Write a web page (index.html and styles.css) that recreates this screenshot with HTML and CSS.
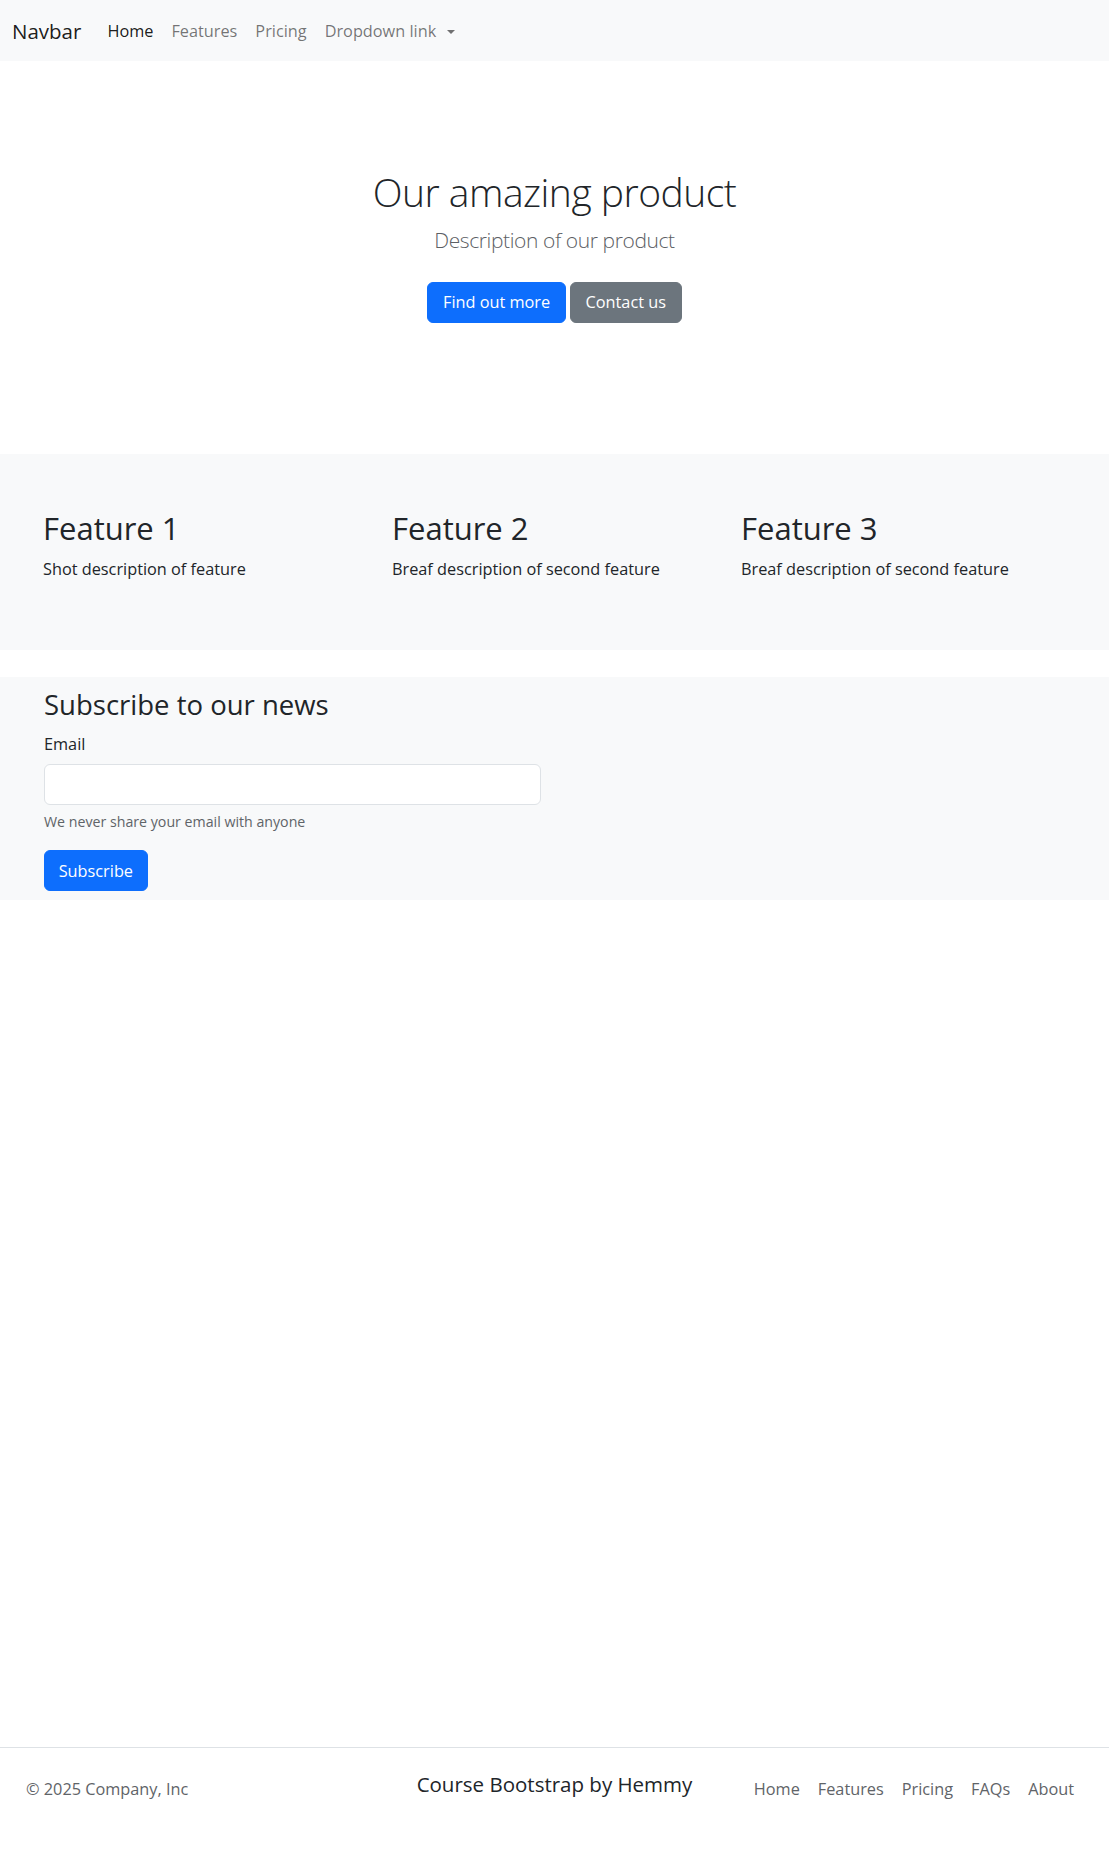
FILE: index.html
```html
<!DOCTYPE html>
<html lang="en">
<head>
<meta charset="utf-8">
<title>Course Bootstrap</title>
<link rel="stylesheet" href="styles.css">
</head>
<body>
<nav class="navbar">
  <a class="brand" href="#">Navbar</a>
  <ul class="nav-links">
    <li><a class="nav-link active" href="#">Home</a></li>
    <li><a class="nav-link" href="#">Features</a></li>
    <li><a class="nav-link" href="#">Pricing</a></li>
    <li><a class="nav-link dropdown" href="#">Dropdown link<span class="caret"></span></a></li>
  </ul>
</nav>
<main>
  <section class="hero">
    <h1 class="hero-title">Our amazing product</h1>
    <p class="lead">Description of our product</p>
    <div class="hero-actions">
      <a class="btn btn-primary" href="#">Find out more</a>
      <a class="btn btn-secondary" href="#">Contact us</a>
    </div>
  </section>
  <section class="features">
    <div class="feature">
      <h2 class="feature-title">Feature 1</h2>
      <p class="feature-text">Shot description of feature</p>
    </div>
    <div class="feature">
      <h2 class="feature-title">Feature 2</h2>
      <p class="feature-text">Breaf description of second feature</p>
    </div>
    <div class="feature">
      <h2 class="feature-title">Feature 3</h2>
      <p class="feature-text">Breaf description of second feature</p>
    </div>
  </section>
  <section class="subscribe">
    <h2 class="subscribe-title">Subscribe to our news</h2>
    <form class="subscribe-form">
      <label class="form-label" for="email">Email</label>
      <input class="form-control" id="email" type="email">
      <div class="form-text">We never share your email with anyone</div>
      <button class="btn btn-primary btn-submit" type="submit">Subscribe</button>
    </form>
  </section>
</main>
<footer class="footer">
  <p class="copyright">© 2025 Company, Inc</p>
  <span class="footer-title">Course Bootstrap by Hemmy</span>
  <ul class="footer-nav">
    <li><a class="footer-link" href="#">Home</a></li>
    <li><a class="footer-link" href="#">Features</a></li>
    <li><a class="footer-link" href="#">Pricing</a></li>
    <li><a class="footer-link" href="#">FAQs</a></li>
    <li><a class="footer-link" href="#">About</a></li>
  </ul>
</footer>
</body>
</html>
```

FILE: styles.css
```css
* {
  box-sizing: border-box;
}

body {
  margin: 0;
  min-height: 100vh;
  display: flex;
  flex-direction: column;
  font-family: "Open Sans", "Segoe UI", sans-serif;
  font-size: 16.3px;
  line-height: 1.5;
  color: #212529;
  background: #fff;
}

/* Navbar */
.navbar {
  display: flex;
  align-items: center;
  height: 61px;
  padding: 2px 12px 0;
  background: #f8f9fa;
}

.brand {
  font-size: 20.5px;
  line-height: 1.5;
  color: rgba(0, 0, 0, 0.9);
  text-decoration: none;
  margin-right: 17px;
}

.nav-links {
  display: flex;
  align-items: center;
  margin: 0;
  padding: 0;
  list-style: none;
}

.nav-link {
  display: flex;
  align-items: center;
  padding: 0 9px;
  color: rgba(0, 0, 0, 0.55);
  text-decoration: none;
}

.nav-link.active {
  color: rgba(0, 0, 0, 0.9);
}

.caret {
  display: inline-block;
  width: 0;
  height: 0;
  margin-left: 11px;
  border-top: 4.5px solid rgba(0, 0, 0, 0.55);
  border-left: 4.5px solid transparent;
  border-right: 4.5px solid transparent;
}

/* Hero */
.hero {
  text-align: center;
  padding: 108px 0 131px;
}

.hero-title {
  margin: 0;
  font-size: 39px;
  font-weight: 300;
  line-height: 1.2;
  letter-spacing: -0.5px;
}

.lead {
  margin: 9px 0 0;
  font-size: 21px;
  font-weight: 300;
  line-height: 1.5;
  letter-spacing: -0.4px;
  color: #5c6064;
}

.hero-actions {
  display: flex;
  justify-content: center;
  gap: 4px;
  margin-top: 25.5px;
}

/* Buttons */
.btn {
  display: inline-block;
  padding: 7.3px 14.7px;
  border: 1px solid transparent;
  border-radius: 6px;
  font-family: inherit;
  font-size: 16.3px;
  line-height: 1.5;
  color: #fff;
  text-decoration: none;
  cursor: pointer;
}

.btn-primary {
  background: #0d6efd;
  border-color: #0d6efd;
}

.btn-secondary {
  background: #6c757d;
  border-color: #6c757d;
}

/* Features */
.features {
  display: grid;
  grid-template-columns: repeat(3, 1fr);
  padding: 56.4px 19px 69px 43px;
  background: #f8f9fa;
}

.feature-title {
  margin: 0;
  font-size: 31px;
  font-weight: 400;
  line-height: 1.2;
}

.feature-text {
  margin: 9.6px 0 0;
}

/* Subscribe */
.subscribe {
  margin-top: 26.4px;
  padding: 10.8px 44px 9px;
  background: #f8f9fa;
}

.subscribe-title {
  margin: 0;
  font-size: 27.5px;
  font-weight: 400;
  line-height: 1.2;
}

.form-label {
  display: block;
  margin-top: 11.3px;
}

.form-control {
  display: block;
  width: 497px;
  height: 41px;
  margin-top: 8px;
  border: 1px solid #dee2e6;
  border-radius: 6px;
  background: #fff;
}

.form-text {
  margin-top: 5.5px;
  font-size: 14.2px;
  line-height: 1.5;
  color: #5f6468;
}

.btn-submit {
  margin-top: 18.2px;
  padding: 7.3px 13.7px;
}

/* Footer */
.footer {
  margin-top: auto;
  margin-bottom: 24px;
  display: grid;
  grid-template-columns: 1fr auto 1fr;
  align-items: start;
  padding: 21px 26px 27.5px;
  border-top: 1px solid #dee2e6;
}

.copyright {
  margin: 8px 0 0;
  color: #5f6468;
}

.footer-title {
  font-size: 20.5px;
  line-height: 1.5;
  color: #212529;
}

.footer-nav {
  justify-self: end;
  display: flex;
  margin: 8px 0 0;
  padding: 0;
  list-style: none;
}

.footer-link {
  display: block;
  padding: 0 9px;
  color: #5f6468;
  text-decoration: none;
}
```
